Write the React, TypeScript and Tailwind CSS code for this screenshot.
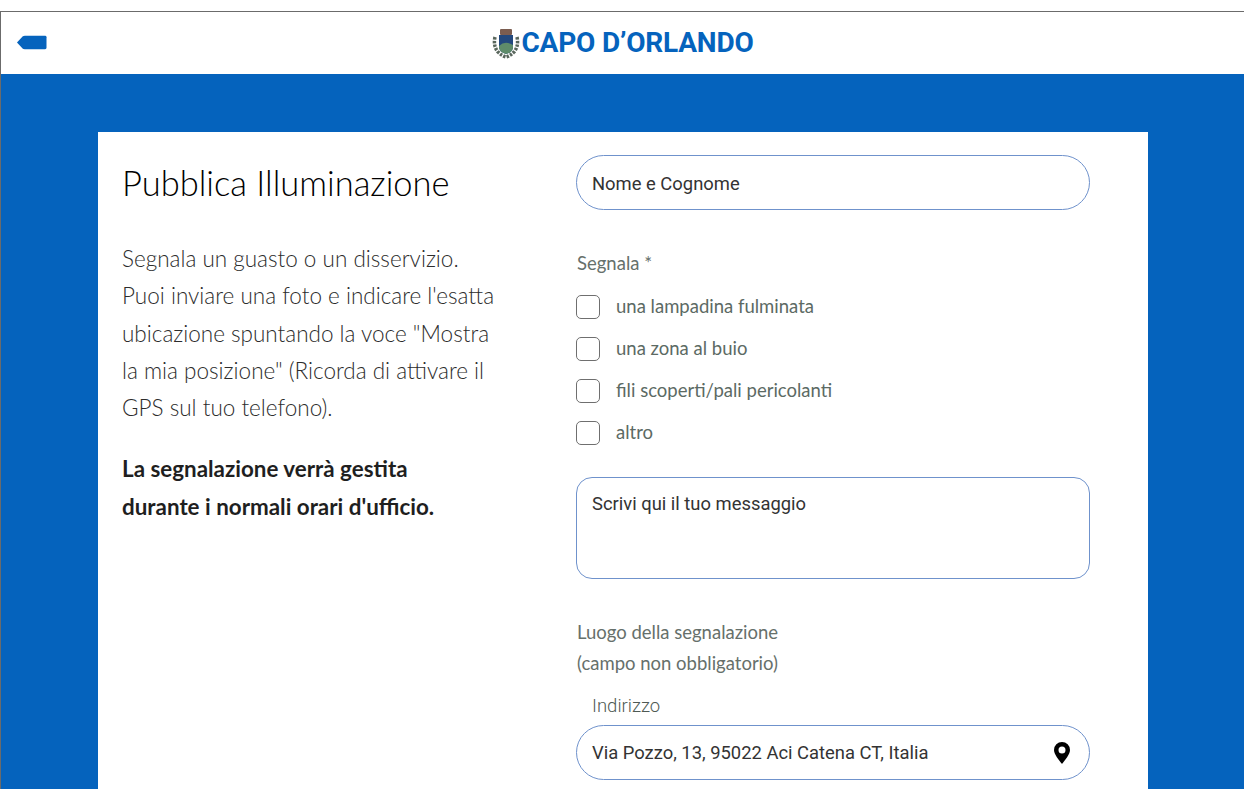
export default function App() {
  const opts = ["una lampadina fulminata", "una zona al buio", "fili scoperti/pali pericolanti", "altro"];
  return (
    <div className="h-[800px] w-[1244px] overflow-hidden bg-white pt-[11px] font-['Lato',sans-serif]">
      <div className="flex h-[778px] flex-col overflow-hidden border-l border-t border-[#6b6b6b]">
        <header className="relative flex h-[62px] shrink-0 items-center justify-center bg-white">
          <svg className="absolute left-[16px] top-[23px]" width="30" height="15" viewBox="0 0 31 15">
            <path d="M0 7.5 L6 1 Q6.5 .5 8 .5 H29 Q30.5 .5 30.5 2 V13 Q30.5 14.500 29 14.500 H8 Q6.500 14.500 6 14 Z" fill="#0563bd" />
          </svg>
          <div className="flex items-center gap-[2px]">
            <svg width="28" height="32" viewBox="0 0 28 32">
              <path d="M3 10 Q1 19 6 25 Q10 29 14 30 Q18 29 22 25 Q27 19 25 10" fill="none" stroke="#59665c" strokeWidth="3.500" strokeDasharray="2.500 1.200" />
              <rect x="8" y="2" width="12" height="6" rx="1" fill="#7b5d50" />
              <path d="M7 8 H21 V20 Q21 25 14 27 Q7 25 7 20 Z" fill="#23497e" />
              <path d="M7 19 Q13 13 21 18 V20 Q21 25 14 27 Q7 25 7 20 Z" fill="#5f8c6a" />
            </svg>
            <span className="font-['Roboto',sans-serif] text-[28px] font-bold leading-none tracking-[-0.2px] text-[#0563bd]">CAPO D’ORLANDO</span>
          </div>
        </header>
        <main className="flex-1 bg-[#0563bd] pl-[97px] pt-[58px]">
          <div className="flex h-[700px] w-[1050px] bg-white pt-[23px]">
            <section className="w-[478px] shrink-0 pl-6">
              <h1 className="mt-[6px] text-[34.500px] font-light leading-[44px] text-black">Pubblica Illuminazione</h1>
              <p className="mt-[35px] text-[22.500px] font-light leading-[37.300px] text-[#2c2c2c]">
                Segnala un guasto o un disservizio.<br />
                Puoi inviare una foto e indicare l'esatta<br />
                ubicazione spuntando la voce "Mostra<br />
                la mia posizione" (Ricorda di attivare il<br />
                GPS sul tuo telefono).
              </p>
              <p className="mt-6 text-[22.400px] font-bold leading-[37.300px] text-[#1f1f1f]">
                La segnalazione verrà gestita<br />
                durante i normali orari d'ufficio.
              </p>
            </section>
            <section className="w-[514px] shrink-0 font-['Roboto',sans-serif]">
              <div className="flex h-[55px] items-center rounded-[28px] border-[1.500px] border-[#6f92cc] px-[15px] pt-[2px] text-[18.400px] text-[#333]">Nome e Cognome</div>
              <div className="mt-[41px] pl-px font-['Lato',sans-serif] text-[18.500px] leading-6 text-[#66706b]">Segnala *</div>
              <div className="mt-5 flex flex-col gap-[18px] font-['Lato',sans-serif]">
                {opts.map((o) => (
                  <label key={o} className="flex h-6 items-center gap-4 text-[18.500px] text-[#5c6a64]">
                    <span className="size-6 rounded-[5px] border-[1.500px] border-[#6f6f6f]" />
                    {o}
                  </label>
                ))}
              </div>
              <div className="mt-8 h-[102px] rounded-[16px] border-[1.500px] border-[#6f92cc] px-[15px] pt-[16px] text-[18.400px] leading-5 text-[#333]">Scrivi qui il tuo messaggio</div>
              <div className="mt-[38px] pl-px font-['Lato',sans-serif] text-[18.500px] leading-[31px] text-[#66706b]">
                Luogo della segnalazione<br />(campo non obbligatorio)
              </div>
              <div className="mt-[15px] pl-4 text-[18.500px] font-light leading-6 text-[#4f5a54]">Indirizzo</div>
              <div className="mt-[7px] flex h-[55px] items-center justify-between rounded-[28px] border-[1.500px] border-[#6f92cc] pl-[15px] pr-[19px] text-[18.400px] text-[#333]">
                Via Pozzo, 13, 95022 Aci Catena CT, Italia
                <svg width="16" height="22" viewBox="0 0 16 22">
                  <path fillRule="evenodd" d="M8 0a8 8 0 0 1 8 8c0 4.500-5 10-8 14C5 18 0 12.500 0 8a8 8 0 0 1 8-8Zm0 4.500a3.500 3.500 0 1 0 0 7 3.500 3.500 0 0 0 0-7Z" fill="#000" />
                </svg>
              </div>
            </section>
          </div>
        </main>
      </div>
    </div>
  );
}
